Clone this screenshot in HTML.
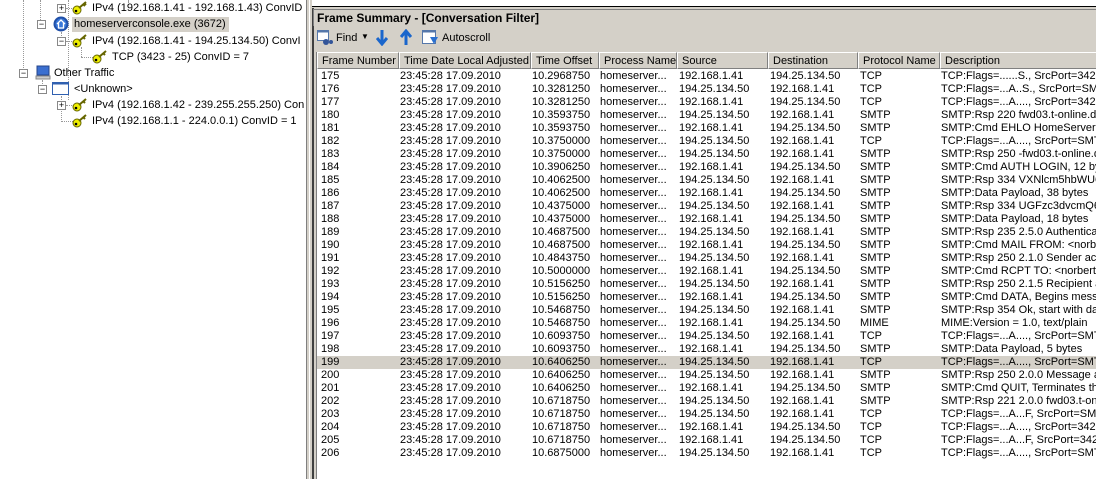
<!DOCTYPE html>
<html><head><meta charset="utf-8"><style>
*{margin:0;padding:0;box-sizing:border-box}
body{width:1096px;height:479px;overflow:hidden;background:#d4d0c8;font-family:"Liberation Sans",Tahoma,sans-serif;font-size:11px;color:#000;position:relative}
.left{position:absolute;left:0;top:0;width:306px;height:479px;background:#fff}
.t{position:absolute;white-space:nowrap;font-size:11px}
.dot{position:absolute;border-color:#999;border-style:dotted;border-width:0}
.pm{position:absolute;width:9px;height:9px;border:1px solid #888;background:#fff;font-size:9px;line-height:7px;text-align:center;color:#000}
.key{position:absolute;width:16px;height:14px}
.right{position:absolute;left:312px;top:0;width:784px;height:479px;background:#d4d0c8}
.top{position:absolute;left:0;top:0;width:784px;height:7px;background:#fff;border-bottom:1px solid #000}
.title{position:absolute;left:1px;top:9px;width:783px;height:17px;border-top:1px solid #808080;border-left:1px solid #808080;font-weight:bold;font-size:12px;padding:2px 3px;line-height:13px}
.frame{position:absolute;left:0;top:8px;width:784px;height:471px;border-left:2px solid #404040}
.list{position:absolute;left:4px;top:52px;width:780px;height:427px;background:#fff;border-left:1px solid #808080}
.hd{position:absolute;top:0;height:17px;background:#d4d0c8;border-right:1px solid #808080;border-bottom:1px solid #808080;border-top:1px solid #fff;border-left:1px solid #fff;padding:2px 0 0 4px;font-size:11px;white-space:nowrap;overflow:hidden;line-height:13px}
.row{position:absolute;left:0;width:780px;height:13px;white-space:nowrap;line-height:13px}
.row span{position:absolute;top:0;overflow:hidden}
.sel{background:#d4d0c8}
</style></head><body>
<div class="left">
 <div class="dot" style="left:68px;top:0;height:100px;border-left-width:1px"></div>
 <div class="dot" style="left:40px;top:0;height:24px;border-left-width:1px"></div>
 <div class="dot" style="left:128px;top:0;height:2px;border-left-width:1px"></div>
 <div class="pm" style="left:57px;top:4px">+</div>
 <div class="dot" style="left:66px;top:8px;width:8px;border-top-width:1px"></div>
 <svg class="key" style="left:72px;top:1px" viewBox="0 0 16 14"><circle cx="5" cy="9" r="4" fill="#ee0" stroke="#660" /><path d="M7 7 L14 1 M11 3 L13 5 M12 2 L14 4" stroke="#660" stroke-width="2"/><circle cx="4" cy="10" r="1.3" fill="#000"/></svg>
 <div class="t" style="left:92px;top:2px">IPv4 (192.168.1.41 - 192.168.1.43) ConvID</div>

 <div class="pm" style="left:37px;top:20px">−</div>
 <svg style="position:absolute;left:53px;top:16px" width="16" height="16"><circle cx="8" cy="8" r="7.5" fill="#1f4fa8"/><circle cx="8" cy="8" r="5.5" fill="#3a78d8"/><path d="M4 8 L8 4 L12 8 M5.5 7 V12 H10.5 V7" stroke="#fff" stroke-width="1.3" fill="none"/></svg>
 <div class="t" style="left:72px;top:17px;height:15px;background:#d4d0c8;padding:1px 2px;width:157px">homeserverconsole.exe (3672)</div>

 <div class="dot" style="left:61px;top:32px;height:10px;border-left-width:1px"></div>
 <div class="pm" style="left:57px;top:37px">−</div>
 <div class="dot" style="left:66px;top:41px;width:8px;border-top-width:1px"></div>
 <svg class="key" style="left:72px;top:34px" viewBox="0 0 16 14"><circle cx="5" cy="9" r="4" fill="#ee0" stroke="#660" /><path d="M7 7 L14 1 M11 3 L13 5" stroke="#660" stroke-width="2"/><circle cx="4" cy="10" r="1.3" fill="#000"/></svg>
 <div class="t" style="left:92px;top:35px">IPv4 (192.168.1.41 - 194.25.134.50) ConvI</div>
 <div class="dot" style="left:81px;top:47px;height:10px;border-left-width:1px"></div>
 <div class="dot" style="left:81px;top:57px;width:12px;border-top-width:1px"></div>
 <svg class="key" style="left:92px;top:50px" viewBox="0 0 16 14"><circle cx="5" cy="9" r="4" fill="#ee0" stroke="#660" /><path d="M7 7 L14 1 M11 3 L13 5" stroke="#660" stroke-width="2"/><circle cx="4" cy="10" r="1.3" fill="#000"/></svg>
 <div class="t" style="left:112px;top:51px">TCP (3423 - 25) ConvID = 7</div>

 <div class="dot" style="left:23px;top:0;height:70px;border-left-width:1px"></div>
 <div class="pm" style="left:19px;top:69px">−</div>
 <svg style="position:absolute;left:35px;top:65px" width="16" height="16"><rect x="2" y="1" width="12" height="9" fill="#3b6fd0" stroke="#24458a"/><rect x="1" y="11" width="14" height="3" fill="#ccc" stroke="#888"/></svg>
 <div class="t" style="left:54px;top:67px">Other Traffic</div>
 <div class="dot" style="left:42px;top:80px;height:10px;border-left-width:1px"></div>
 <div class="pm" style="left:38px;top:85px">−</div>
 <svg style="position:absolute;left:52px;top:82px" width="18" height="14"><rect x="0.5" y="0.5" width="16" height="12" fill="#fff" stroke="#3060b0"/><rect x="0.5" y="0.5" width="16" height="2" fill="#3060b0"/></svg>
 <div class="t" style="left:74px;top:83px">&lt;Unknown&gt;</div>
 <div class="dot" style="left:61px;top:96px;height:26px;border-left-width:1px"></div>
 <div class="pm" style="left:57px;top:101px">+</div>
 <div class="dot" style="left:66px;top:105px;width:8px;border-top-width:1px"></div>
 <svg class="key" style="left:72px;top:98px" viewBox="0 0 16 14"><circle cx="5" cy="9" r="4" fill="#ee0" stroke="#660" /><path d="M7 7 L14 1 M11 3 L13 5" stroke="#660" stroke-width="2"/><circle cx="4" cy="10" r="1.3" fill="#000"/></svg>
 <div class="t" style="left:92px;top:99px">IPv4 (192.168.1.42 - 239.255.255.250) Con</div>
 <div class="dot" style="left:61px;top:121px;width:12px;border-top-width:1px"></div>
 <svg class="key" style="left:72px;top:114px" viewBox="0 0 16 14"><circle cx="5" cy="9" r="4" fill="#ee0" stroke="#660" /><path d="M7 7 L14 1 M11 3 L13 5" stroke="#660" stroke-width="2"/><circle cx="4" cy="10" r="1.3" fill="#000"/></svg>
 <div class="t" style="left:92px;top:115px">IPv4 (192.168.1.1 - 224.0.0.1) ConvID = 1</div>
</div>
<div style="position:absolute;left:306px;top:0;width:1px;height:479px;background:#808080"></div>
<div style="position:absolute;left:309px;top:0;width:1px;height:479px;background:#fff"></div>
<div class="right">
 <div class="top"></div>
 <div class="frame"></div>
 <div class="title">Frame Summary - [Conversation Filter]</div>
 <svg style="position:absolute;left:5px;top:30px" width="16" height="16"><rect x="0.5" y="0.5" width="11" height="10" fill="#fff" stroke="#5577aa"/><rect x="0.5" y="0.5" width="11" height="2" fill="#5577aa"/><circle cx="9" cy="12" r="3" fill="#335599"/><circle cx="14" cy="12" r="2" fill="#335599"/></svg>
 <div class="t" style="left:24px;top:32px">Find</div>
 <div class="t" style="left:49px;top:32px;font-size:8px">▼</div>
 <svg style="position:absolute;left:64px;top:29px" width="12" height="17"><path d="M6 1 V13 M1 9 L6 15 L11 9" stroke="#1a66cc" stroke-width="3" fill="none"/></svg>
 <svg style="position:absolute;left:88px;top:29px" width="12" height="17"><path d="M6 16 V4 M1 8 L6 2 L11 8" stroke="#1a66cc" stroke-width="3" fill="none"/></svg>
 <svg style="position:absolute;left:110px;top:30px" width="18" height="16"><rect x="0.5" y="0.5" width="13" height="13" fill="#fff" stroke="#5577aa"/><rect x="0.5" y="0.5" width="13" height="2" fill="#5577aa"/><path d="M8 7 L16 7 L12 14 Z" fill="#2a70d0"/></svg>
 <div class="t" style="left:130px;top:32px">Autoscroll</div>
 <div class="list">
  <div class="hd" style="left:0;width:82px">Frame Number</div>
  <div class="hd" style="left:82px;width:132px">Time Date Local Adjusted</div>
  <div class="hd" style="left:214px;width:68px">Time Offset</div>
  <div class="hd" style="left:282px;width:78px">Process Name</div>
  <div class="hd" style="left:360px;width:91px">Source</div>
  <div class="hd" style="left:451px;width:90px">Destination</div>
  <div class="hd" style="left:541px;width:82px">Protocol Name</div>
  <div class="hd" style="left:623px;width:170px">Description</div>
  <div id="rows"></div>
 </div>
</div>
<script>
var A="192.168.1.41",B="194.25.134.50";
var d=[["175","10.2968750",A,B,"TCP","TCP:Flags=......S., SrcPort=342"],
["176","10.3281250",B,A,"TCP","TCP:Flags=...A..S., SrcPort=SM"],
["177","10.3281250",A,B,"TCP","TCP:Flags=...A...., SrcPort=342"],
["180","10.3593750",B,A,"SMTP","SMTP:Rsp 220  fwd03.t-online.de"],
["181","10.3593750",A,B,"SMTP","SMTP:Cmd EHLO HomeServer, 17"],
["182","10.3750000",B,A,"TCP","TCP:Flags=...A...., SrcPort=SMT"],
["183","10.3750000",B,A,"SMTP","SMTP:Rsp 250 -fwd03.t-online.d"],
["184","10.3906250",A,B,"SMTP","SMTP:Cmd AUTH LOGIN, 12 byte"],
["185","10.4062500",B,A,"SMTP","SMTP:Rsp 334  VXNlcm5hbWU6,"],
["186","10.4062500",A,B,"SMTP","SMTP:Data Payload, 38 bytes"],
["187","10.4375000",B,A,"SMTP","SMTP:Rsp 334  UGFzc3dvcmQ6,"],
["188","10.4375000",A,B,"SMTP","SMTP:Data Payload, 18 bytes"],
["189","10.4687500",B,A,"SMTP","SMTP:Rsp 235  2.5.0 Authentica"],
["190","10.4687500",A,B,"SMTP","SMTP:Cmd MAIL FROM: &lt;norber"],
["191","10.4843750",B,A,"SMTP","SMTP:Rsp 250  2.1.0 Sender acc"],
["192","10.5000000",A,B,"SMTP","SMTP:Cmd RCPT TO: &lt;norbert.H"],
["193","10.5156250",B,A,"SMTP","SMTP:Rsp 250  2.1.5 Recipient a"],
["194","10.5156250",A,B,"SMTP","SMTP:Cmd DATA, Begins messag"],
["195","10.5468750",B,A,"SMTP","SMTP:Rsp 354  Ok, start with da"],
["196","10.5468750",A,B,"MIME","MIME:Version =  1.0, text/plain"],
["197","10.6093750",B,A,"TCP","TCP:Flags=...A...., SrcPort=SMT"],
["198","10.6093750",A,B,"SMTP","SMTP:Data Payload, 5 bytes"],
["199","10.6406250",B,A,"TCP","TCP:Flags=...A...., SrcPort=SMT"],
["200","10.6406250",B,A,"SMTP","SMTP:Rsp 250  2.0.0 Message ac"],
["201","10.6406250",A,B,"SMTP","SMTP:Cmd QUIT, Terminates the"],
["202","10.6718750",B,A,"SMTP","SMTP:Rsp 221  2.0.0 fwd03.t-on"],
["203","10.6718750",B,A,"TCP","TCP:Flags=...A...F, SrcPort=SM"],
["204","10.6718750",A,B,"TCP","TCP:Flags=...A...., SrcPort=342"],
["205","10.6718750",A,B,"TCP","TCP:Flags=...A...F, SrcPort=342"],
["206","10.6875000",B,A,"TCP","TCP:Flags=...A...., SrcPort=SMT"]];
var h="";
d.forEach(function(r,i){
h+='<div class="row'+(r[0]=="199"?' sel':'')+'" style="top:'+(18+i*13)+'px">'+
'<span style="left:4px">'+r[0]+'</span>'+
'<span style="left:83px">23:45:28 17.09.2010</span>'+
'<span style="left:215px">'+r[1]+'</span>'+
'<span style="left:283px;width:76px">homeserver...</span>'+
'<span style="left:362px">'+r[2]+'</span>'+
'<span style="left:453px">'+r[3]+'</span>'+
'<span style="left:543px">'+r[4]+'</span>'+
'<span style="left:624px">'+r[5]+'</span></div>';});
document.getElementById("rows").innerHTML=h;
</script>
</body></html>
